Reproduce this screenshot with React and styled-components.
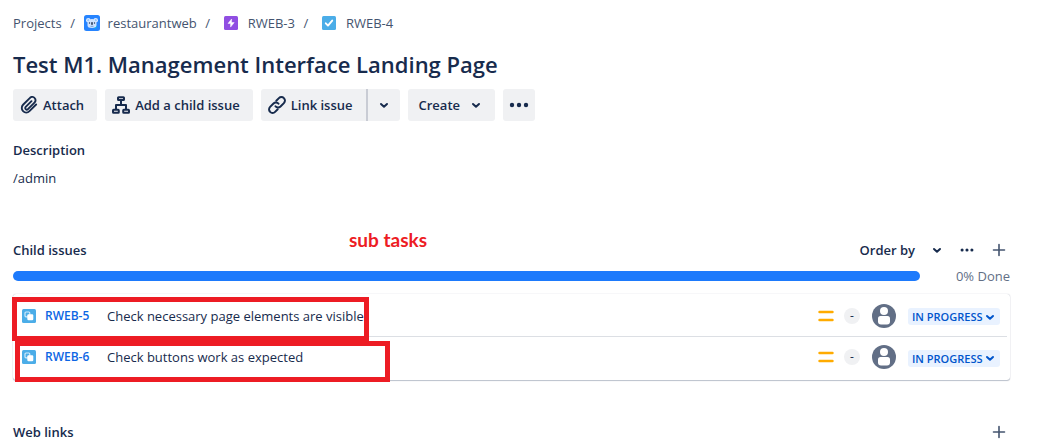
import React from "react";
import styled, { createGlobalStyle } from "styled-components";

const GlobalStyle = createGlobalStyle`
  * { box-sizing: border-box; }
  body {
    margin: 0;
    background: #fff;
    color: #172b4d;
    font: 400 13px/20px "Open Sans", "Noto Sans", sans-serif;
  }
  button, select { font: inherit; color: inherit; border: 0; cursor: pointer; }
  svg { display: block; flex: none; }
`;

const Page = styled.main`
  padding: 13px 38px 0 13px;
`;

const Breadcrumbs = styled.ol`
  display: flex;
  align-items: center;
  height: 20px;
  margin: 0 0 17px;
  padding: 0;
  list-style: none;
  color: #44546f;
`;

const Crumb = styled.li`
  display: flex;
  align-items: center;

  & + &::before {
    content: "/";
    width: 22px;
    text-align: center;
  }
`;

const CrumbLink = styled.a`
  display: flex;
  align-items: center;
  gap: ${(p) => p.$gap || 8}px;
  padding-left: ${(p) => p.$indent || 0}px;
  color: inherit;
  text-decoration: none;
`;

const Title = styled.h1`
  margin: 0 0 11px;
  font-size: 22px;
  line-height: 28px;
  font-weight: 600;
`;

const Toolbar = styled.div`
  display: flex;
  gap: 8px;
`;

const ToolButton = styled.button`
  display: flex;
  align-items: center;
  justify-content: ${(p) => (p.$square ? "center" : "flex-start")};
  gap: ${(p) => p.$gap || 5}px;
  height: 32px;
  min-width: 32px;
  padding: ${(p) => (p.$square ? "0" : p.$text ? "0 14px 0 11px" : "0 13px 0 7px")};
  border-radius: 3px;
  background: #f0f1f3;
  font-weight: 600;
  white-space: nowrap;
`;

const SplitButton = styled.div`
  display: flex;

  ${ToolButton}:first-child {
    border-radius: 3px 0 0 3px;
    border-right: 2px solid #c9ccd4;
  }
  ${ToolButton}:last-child { border-radius: 0 3px 3px 0; }
`;

const Heading = styled.h2`
  margin: 0;
  font-size: 13px;
  line-height: 20px;
  font-weight: 600;
`;

const Section = styled.section`
  position: relative;
  margin-top: ${(p) => p.$top}px;
`;

const Description = styled.p`
  margin: 8px 0 0;
`;

const SectionHeader = styled.div`
  display: flex;
  align-items: center;
  justify-content: space-between;
`;

const Actions = styled.div`
  display: flex;
  align-items: center;
  gap: 18px;
  padding-right: 4px;
`;

const PlainButton = styled.button`
  display: flex;
  align-items: center;
  gap: 17px;
  padding: 0;
  background: none;
  font-weight: 600;
`;

const Progress = styled.div`
  display: flex;
  align-items: center;
  gap: 33px;
  margin-top: 6px;
`;

const Track = styled.div`
  flex: 1;
  height: 10px;
  border-radius: 5px;
  background: #1d7afc;
`;

const Done = styled.span`
  min-width: 57px;
  color: #626f86;
  text-align: right;
`;

const IssueList = styled.ul`
  margin: 8px 0 0;
  padding: 0;
  list-style: none;
  border-radius: 3px;
  box-shadow: 0 0 1px #091e4250, 0 1px 1px #091e4240;
`;

const IssueRow = styled.li`
  position: relative;
  display: flex;
  align-items: center;
  height: 43px;
  padding: 0 10px 0 9px;

  & + & { padding-bottom: 3px; }
  & + &::before {
    content: "";
    position: absolute;
    inset: -1px 3px auto 0;
    border-top: 1px solid #dcdfe4;
  }
`;

const IssueKey = styled.a`
  width: 62px;
  margin-left: 9px;
  color: #0c66e4;
  font-size: 12px;
  font-weight: 600;
  text-decoration: none;
`;

const Summary = styled.span`
  flex: 1;
  white-space: nowrap;
`;

const Estimate = styled.span`
  width: 16px;
  height: 16px;
  margin: 0 12px 0 10px;
  border-radius: 50%;
  background: #f0f1f3;
  font-size: 12px;
  line-height: 16px;
  text-align: center;
`;

const StatusField = styled.label`
  display: grid;
  align-items: center;
  width: 92px;
  margin: 2px 0 0 12px;
  border-radius: 3px;
  background: #e9f2ff;
  color: #0055cc;

  > * { grid-area: 1 / 1; }
  svg { justify-self: end; margin-right: 5px; pointer-events: none; }
`;

const Status = styled.select`
  appearance: none;
  width: 100%;
  height: 17px;
  padding: 0 0 0 4px;
  background: none;
  color: inherit;
  font-size: 11px;
  line-height: 17px;
  font-weight: 600;
`;

const Highlight = styled.span`
  position: absolute;
  top: ${(p) => p.$top}px;
  left: ${(p) => p.$left}px;
  width: ${(p) => p.$width}px;
  height: ${(p) => p.$height}px;
  border: 5px solid #ed1c24;
  pointer-events: none;
  z-index: 1;
`;

const Note = styled.span`
  position: absolute;
  top: -10px;
  left: 336px;
  color: #ed1c24;
  font: 700 19px/20px Lato, "Open Sans", sans-serif;
`;

const Chevron = () => (
  <svg width="10" height="10" viewBox="0 0 10 10" fill="none" stroke="currentColor" strokeWidth="2" strokeLinecap="round" strokeLinejoin="round" aria-hidden="true">
    <path d="M2 4l3 2.800 3-2.800" />
  </svg>
);

const Plus = () => (
  <svg width="14" height="14" viewBox="0 0 14 14" fill="none" stroke="#44546f" strokeWidth="1.6" strokeLinecap="round" aria-hidden="true">
    <path d="M7 1.5v11M1.5 7h11" />
  </svg>
);

const Dots = ({ size }) => (
  <svg width={size} height="6" viewBox="0 0 20 6" fill="currentColor" aria-hidden="true">
    <circle cx="3" cy="3" r="2.2" />
    <circle cx="10" cy="3" r="2.2" />
    <circle cx="17" cy="3" r="2.2" />
  </svg>
);

const ProjectIcon = () => (
  <svg width="16" height="16" viewBox="0 0 16 16" aria-hidden="true">
    <rect width="16" height="16" rx="2.5" fill="#2684ff" />
    <circle cx="4.3" cy="5.2" r="2.3" fill="#deebff" />
    <circle cx="11.7" cy="5.2" r="2.3" fill="#deebff" />
    <circle cx="4.3" cy="5.2" r="1" fill="#79b8ff" />
    <circle cx="11.7" cy="5.2" r="1" fill="#79b8ff" />
    <path d="M3.5 8a4.5 4 0 0 1 9 0v2.5q0 2.5-4.5 2.5t-4.5-2.5z" fill="#cfe3ff" />
    <rect x="7.2" y="7" width="1.6" height="3" rx=".8" fill="#253858" />
    <circle cx="5.5" cy="8" r=".7" fill="#253858" />
    <circle cx="10.5" cy="8" r=".7" fill="#253858" />
    <path d="M6.5 11.3h3" stroke="#5b8fd0" strokeWidth=".8" />
    <path d="M9.5 13q3-.3 3-2.5l.5 1-1.5 2z" fill="#00c7e5" />
  </svg>
);

const EpicIcon = () => (
  <svg width="14" height="14" viewBox="0 0 14 14" aria-hidden="true">
    <rect width="14" height="14" rx="1.5" fill="#904ee2" />
    <path d="M7.6 3L4 7.4h2.6v3.7L10.2 6.6H7.6z" fill="#fff" stroke="#fff" strokeWidth=".5" strokeLinejoin="round" />
  </svg>
);

const TaskIcon = () => (
  <svg width="14" height="14" viewBox="0 0 14 14" aria-hidden="true">
    <rect width="14" height="14" rx="1.5" fill="#4bade8" />
    <path d="M3.8 7.3L6 9.6l4.2-5" fill="none" stroke="#fff" strokeWidth="1.9" strokeLinecap="round" strokeLinejoin="round" />
  </svg>
);

const SubtaskIcon = () => (
  <svg width="14" height="14" viewBox="0 0 14 14" aria-hidden="true">
    <rect width="14" height="14" rx="1.5" fill="#4bade8" />
    <rect x="3" y="3" width="4.8" height="4.8" rx="1" fill="none" stroke="#fff" strokeWidth="1.2" opacity=".75" />
    <rect x="5.3" y="5.3" width="6" height="6" rx="1.2" fill="#fff" />
  </svg>
);

const AttachIcon = () => (
  <svg width="18" height="18" viewBox="0 0 24 24" fill="none" stroke="currentColor" strokeWidth="2.5" strokeLinecap="round" strokeLinejoin="round" aria-hidden="true">
    <path d="M21.5 11.3l-8.9 8.9a6 6 0 0 1-8.5-8.5l8.9-8.9a4.2 4.2 0 0 1 7.3 1.2c.8 1.8.3 3.6-1 4.9l-8.7 8.7a2.1 2.1 0 0 1-3-3l7.7-7.7" />
  </svg>
);

const ChildIcon = () => (
  <svg width="18" height="18" viewBox="0 0 18 18" fill="none" stroke="currentColor" strokeWidth="2" strokeLinejoin="round" aria-hidden="true">
    <rect x="6" y="1.2" width="6" height="2.8" rx=".6" />
    <rect x="1" y="13.8" width="5.8" height="3" rx=".6" />
    <rect x="11.2" y="13.8" width="5.8" height="3" rx=".6" />
    <path d="M9 4v5M4 13.5V9h10v4.5" />
  </svg>
);

const LinkIcon = () => (
  <svg width="18" height="18" viewBox="0 0 18 18" fill="none" stroke="currentColor" strokeWidth="2" strokeLinecap="round" aria-hidden="true">
    <path d="M7.5 10.3a3.5 3.5 0 0 0 5 .2l3.4-3.4a3.5 3.5 0 0 0-5-5L8.3 4.7" />
    <path d="M10.5 7.7a3.5 3.5 0 0 0-5-.2l-3.4 3.4a3.5 3.5 0 0 0 5 5l2.6-2.6" />
  </svg>
);

const PriorityIcon = () => (
  <svg width="16" height="12" viewBox="0 0 16 12" stroke="#ffab00" strokeWidth="2.4" strokeLinecap="round" aria-label="Medium priority">
    <path d="M1.5 2h13M1.5 10h13" />
  </svg>
);

const Avatar = () => (
  <svg width="24" height="24" viewBox="0 0 24 24" aria-label="Unassigned">
    <circle cx="12" cy="12" r="12" fill="#626f86" />
    <circle cx="12" cy="7" r="4" fill="#fff" />
    <path d="M6 14.5q0-2.5 2.5-2.5h7q2.5 0 2.5 2.5v3q0 3-3 3H9q-3 0-3-3z" fill="#fff" />
  </svg>
);

const issues = [
  { key: "RWEB-5", summary: "Check necessary page elements are visible", mark: { $top: 3, $left: -1, $width: 357, $height: 44 } },
  { key: "RWEB-6", summary: "Check buttons work as expected", mark: { $top: 4, $left: 2, $width: 375, $height: 41 } },
];

export default function App() {
  return (
    <Page>
      <GlobalStyle />
      <nav aria-label="Breadcrumbs">
        <Breadcrumbs>
          <Crumb><CrumbLink href="#projects">Projects</CrumbLink></Crumb>
          <Crumb><CrumbLink href="#restaurantweb"><ProjectIcon />restaurantweb</CrumbLink></Crumb>
          <Crumb><CrumbLink href="#RWEB-3" $indent={5} $gap={10}><EpicIcon />RWEB-3</CrumbLink></Crumb>
          <Crumb><CrumbLink href="#RWEB-4" $indent={5} $gap={10}><TaskIcon />RWEB-4</CrumbLink></Crumb>
        </Breadcrumbs>
      </nav>

      <Title>Test M1. Management Interface Landing Page</Title>

      <Toolbar>
        <ToolButton><AttachIcon />Attach</ToolButton>
        <ToolButton><ChildIcon />Add a child issue</ToolButton>
        <SplitButton>
          <ToolButton><LinkIcon />Link issue</ToolButton>
          <ToolButton $square aria-label="More link options"><Chevron /></ToolButton>
        </SplitButton>
        <ToolButton $text $gap={11}>Create<Chevron /></ToolButton>
        <ToolButton $square aria-label="More actions"><Dots size={20} /></ToolButton>
      </Toolbar>

      <Section $top={19}>
        <Heading>Description</Heading>
        <Description>/admin</Description>
      </Section>

      <Section $top={52}>
        <SectionHeader>
          <Heading>Child issues</Heading>
          <Actions>
            <PlainButton>Order by<Chevron /></PlainButton>
            <PlainButton aria-label="Child issue actions"><Dots size={14} /></PlainButton>
            <PlainButton aria-label="Create child issue"><Plus /></PlainButton>
          </Actions>
        </SectionHeader>
        <Note>sub tasks</Note>
        <Progress>
          <Track />
          <Done>0% Done</Done>
        </Progress>
        <IssueList>
          {issues.map((issue) => (
            <IssueRow key={issue.key}>
              <SubtaskIcon />
              <IssueKey href={`#${issue.key}`}>{issue.key}</IssueKey>
              <Summary>{issue.summary}</Summary>
              <PriorityIcon />
              <Estimate>-</Estimate>
              <Avatar />
              <StatusField>
                <Status aria-label={`Status of ${issue.key}`} defaultValue="IN PROGRESS">
                  <option>TO DO</option>
                  <option>IN PROGRESS</option>
                  <option>DONE</option>
                </Status>
                <Chevron />
              </StatusField>
              <Highlight {...issue.mark} />
            </IssueRow>
          ))}
        </IssueList>
      </Section>

      <Section $top={42}>
        <SectionHeader>
          <Heading>Web links</Heading>
          <Actions>
            <PlainButton aria-label="Add web link"><Plus /></PlainButton>
          </Actions>
        </SectionHeader>
      </Section>
    </Page>
  );
}
